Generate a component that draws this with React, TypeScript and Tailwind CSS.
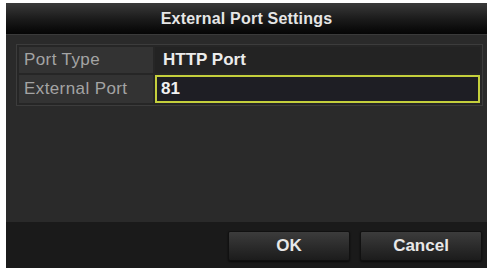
import React from "react";

export default function App() {
  return (
    <div
      className="w-[487px] h-[268px] bg-white pl-[6px] pt-[3px] overflow-hidden"
      style={{ fontFamily: '"Liberation Sans", Arial, sans-serif' }}
    >
      <div className="flex flex-col h-full w-full bg-[#2a2a2a]">
        {/* Title bar */}
        <div className="h-[32px] flex items-center justify-center bg-gradient-to-b from-[#3a3a3a] via-[#1c1c1c] to-[#050505] border-b border-[#3a3a3a]">
          <span className="text-[16px] font-bold text-[#e6e6e6] tracking-[0.2px]">
            External Port Settings
          </span>
        </div>

        {/* Body */}
        <div className="flex-1 pl-[10px] pr-[4px] pt-[9px]">
          <div className="border border-[#3c3c3c] bg-[#262626] p-[2px] flex flex-col gap-[2px]">
            <div className="flex h-[26px] gap-[2px]">
              <div className="w-[134px] bg-[#333333] flex items-center pl-[5px] text-[17px] tracking-[0.4px] text-[#a4a4a4]">
                Port Type
              </div>
              <div className="flex-1 bg-[#232323] flex items-center pl-[8px] text-[17px] font-bold text-[#ececec]">
                HTTP Port
              </div>
            </div>
            <div className="flex h-[28px] gap-[2px]">
              <div className="w-[134px] bg-[#333333] flex items-center pl-[5px] text-[17px] tracking-[0.4px] text-[#a4a4a4]">
                External Port
              </div>
              <div className="flex-1 bg-[#1e1e24] border-2 border-[#c4cf3c] flex items-center pl-[4px] text-[17px] font-bold text-[#f0f0f0]">
                81
              </div>
            </div>
          </div>
        </div>

        {/* Footer */}
        <div className="h-[46px] bg-[#1a1a1a] flex items-center justify-end gap-[10px] pr-[5px] pt-[2px]">
          <button className="w-[122px] h-[30px] bg-gradient-to-b from-[#3c3c3c] to-[#1c1c1c] border border-[#111] rounded-[2px] text-[17px] font-bold text-[#e8e8e8] shadow-[0_1px_2px_rgba(0,0,0,0.6)]">
            OK
          </button>
          <button className="w-[122px] h-[30px] bg-gradient-to-b from-[#3c3c3c] to-[#1c1c1c] border border-[#111] rounded-[2px] text-[17px] font-bold text-[#e8e8e8] shadow-[0_1px_2px_rgba(0,0,0,0.6)]">
            Cancel
          </button>
        </div>
      </div>
    </div>
  );
}
